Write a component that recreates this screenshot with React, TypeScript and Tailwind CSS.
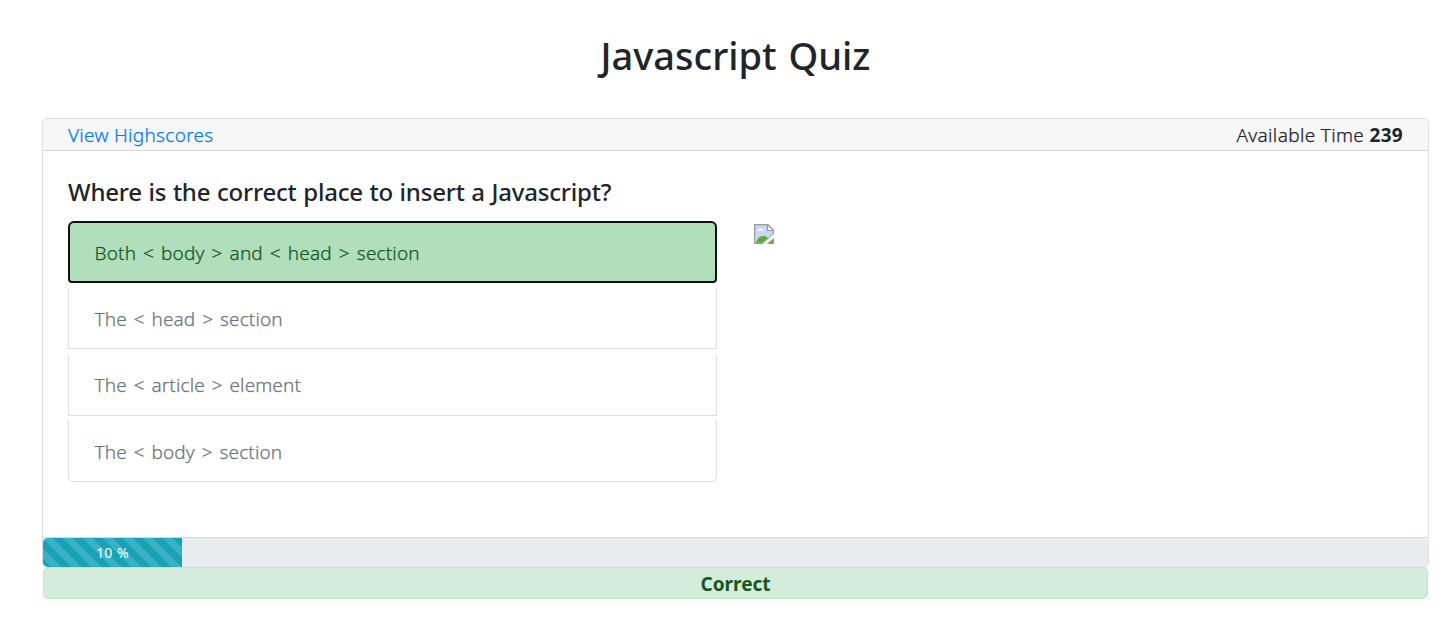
const options = [
  { text: "The < head > section", box: "mt-[5px] h-[61px] border-b pt-[2px]" },
  { text: "The < article > element", box: "mt-[5px] h-[62px] border-b pt-[1px]" },
  { text: "The < body > section", box: "mt-[5px] h-[61px] rounded-b-[5px] border-b pt-[2px]" },
];

function BrokenImage() {
  return (
    <svg width="20" height="20" viewBox="0 0 20 20" role="img" aria-label="Question illustration">
      <path d="M.6.6h13.2l5.600 5.600V10L10 19.400H.6z" fill="#c6d8f6" stroke="#999" strokeWidth="1.200" />
      <path d="M1.800 18.800c1.500-5 4.500-6.800 7.700-6.800 2.500 0 3.700 1 4.500 2.300l-5 4.500z" fill="#5aae34" />
      <path d="M3.300 7q0-1.800 2-1.800Q6 3.500 7.500 4.200q1.200.6 1 1.500 1.500 0 1.500 1.300z" fill="#fff" />
      <path d="M13.500.6v5.900h5.900z" fill="#fff" stroke="#999" strokeWidth="1.200" />
      <path d="M8.500 20 20 10v4l-6.500 6z" fill="#fff" />
      <path d="M13.500 19.400h5.900v-5z" fill="#5aae34" />
      <path d="M13.500 19.400h5.900v-5" fill="none" stroke="#999" strokeWidth="1.200" />
    </svg>
  );
}

export default function App() {
  return (
    <main className="h-[636px] overflow-hidden bg-white pl-[42px] pr-[21px] pt-[32px] font-['Noto_Sans',sans-serif] text-[19px] text-[#212529]">
      <h1 className="flex h-[48px] items-center justify-center whitespace-nowrap pb-[2px] text-[38px] font-medium leading-[46px] [word-spacing:2px]">Javascript Quiz</h1>
      <section className="mt-[38px] h-[450px] rounded-[5px] border border-[#dfdfdf]">
        <header className="flex h-[32px] items-center justify-between rounded-t-[4px] border-b border-[#d7d7d7] bg-[#f7f7f7] px-[25px] font-light leading-[30px] tracking-[0.3px]">
          <a href="#scores" className="text-[#007bff] [-webkit-text-stroke:0.25px]"><span>View Highscores</span></a>
          <span><span className="tracking-[0.350px] [-webkit-text-stroke:0.25px]">Available Time </span><b className="font-bold">239</b></span>
        </header>
        <div className="h-[387px] border-b border-[#d7d7d7] px-[25px] pt-[26px]">
          <h2 className="h-[30px] text-[24px] font-medium leading-[30px] tracking-[-0.2px] [word-spacing:0.6px]"><span>Where is the correct place to insert a Javascript?</span></h2>
          <div className="mt-[14px] flex gap-[37px]">
            <div className="w-[649px]">
              <button className="flex h-[62px] w-full items-center rounded-t-[6px] rounded-b-[4px] border-2 border-[#101010] bg-[#b1dfbb] px-[24.500px] pt-[2px] text-left font-light tracking-[0.150px] text-[#155724] [-webkit-text-stroke:0.25px] [word-spacing:1.900px]">
                <span>Both &lt; body &gt; and &lt; head &gt; section</span>
              </button>
              {options.map((option) => (
                <button key={option.text} className={`flex w-full items-center border-x border-[#dfdfdf] px-[25.500px] text-left font-light tracking-[0.120px] text-[#6c757d] [-webkit-text-stroke:0.25px] [word-spacing:1.800px] ${option.box}`}>
                  <span>{option.text}</span>
                </button>
              ))}
            </div>
            <div className="pt-[3px]"><BrokenImage /></div>
          </div>
        </div>
        <div className="flex h-[29px] overflow-hidden rounded-[5px] bg-[#e9ecef]">
          <div className="flex w-[139px] items-center justify-center bg-[#17a2b8] bg-[linear-gradient(45deg,rgba(255,255,255,.15)_25%,transparent_25%,transparent_50%,rgba(255,255,255,.15)_50%,rgba(255,255,255,.15)_75%,transparent_75%,transparent)] bg-[length:20px_20px] text-[14px] text-white [word-spacing:1px]"><span>10 %</span></div>
        </div>
        <div className="flex h-[32px] items-center justify-center rounded-[5px] border border-[#c3e6cb] bg-[#d4edda] pt-[2px] font-bold text-[#155724]"><span>Correct</span></div>
      </section>
    </main>
  );
}
